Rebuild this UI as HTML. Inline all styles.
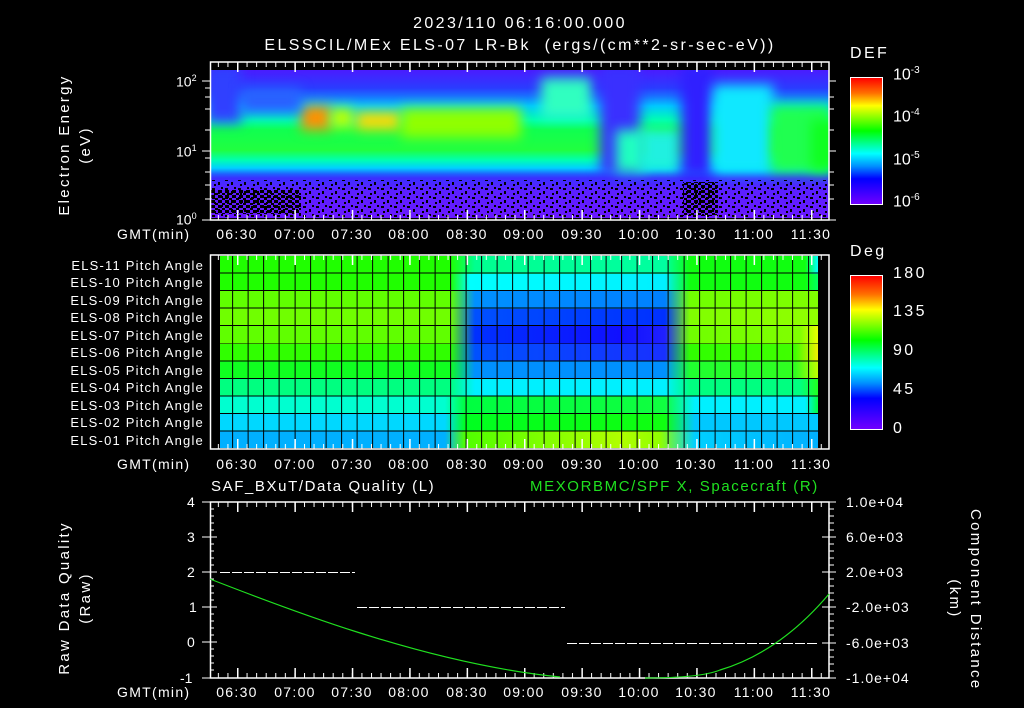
<!DOCTYPE html>
<html><head><meta charset="utf-8"><style>
body{margin:0;background:#000;width:1024px;height:708px;overflow:hidden;position:relative;font-family:"Liberation Sans",sans-serif;color:#fff}
.a{position:absolute}
.t{position:absolute;font-size:14px;white-space:nowrap;line-height:1}
.b{position:absolute;filter:blur(6px)}
#spec{left:211px;top:70px;width:618px;height:148px;overflow:hidden;
background:linear-gradient(#4a1cff 0px,#2a3cff 18px,#1a70ff 26px,#00c8ff 36px,#00ffb0 50px,#10ff50 60px,#20ff40 80px,#00ffb0 90px,#00d0ff 98px,#2060ff 104px,#3a30ff 108px,#5a20ff 120px,#6a18ff 148px)}
#pa{left:220px;top:256px;width:598px;height:193px;display:flex;flex-direction:column}
#pa div{flex:1}
#grid{left:220px;top:256px;width:598px;height:193px;
background:repeating-linear-gradient(90deg,transparent 0 14.56px,#000 14.56px 15.56px),repeating-linear-gradient(180deg,transparent 0 16.55px,#000 16.55px 17.55px);background-position:-2.4px 0,0 0}
.cb{background:linear-gradient(#ff0000 0%,#ff7000 12%,#ffff00 22%,#80ff00 32%,#00ff00 42%,#00ff90 52%,#00ffff 60%,#0090ff 70%,#0000ff 80%,#7000ff 100%);border:1px solid #fff}
.pl{position:absolute;right:820px;font-size:13px;letter-spacing:1.2px;white-space:nowrap}
.tl{position:absolute;width:60px;text-align:center;font-size:14px;letter-spacing:1.3px;line-height:1}
.ls{letter-spacing:2.4px}
</style></head><body>
<div class="t ls" style="left:0;width:1040px;text-align:center;top:16px;font-size:16px">2023/110 06:16:00.000</div>
<div class="t ls" style="left:0;width:1040px;text-align:center;top:38px;font-size:16px">ELSSCIL/MEx ELS-07 LR-Bk&nbsp;&nbsp;(ergs/(cm**2-sr-sec-eV))</div>

<div id="spec" class="a">
<div class="b" style="left:-5px;top:-5px;width:35px;height:58px;background:#3040ff"></div>
<div class="b" style="left:90px;top:36px;width:30px;height:24px;background:#ff9000"></div>
<div class="b" style="left:120px;top:38px;width:22px;height:20px;background:#c0ff00"></div>
<div class="b" style="left:145px;top:42px;width:45px;height:18px;background:#ffd800"></div>
<div class="b" style="left:190px;top:38px;width:120px;height:30px;background:#90ff00"></div>
<div class="b" style="left:30px;top:18px;width:60px;height:25px;background:#2a60ff"></div>
<div class="b" style="left:330px;top:8px;width:50px;height:40px;background:#30ffc0"></div>
<div class="b" style="left:389px;top:-5px;width:40px;height:110px;background:#3a30ff"></div>
<div class="b" style="left:405px;top:60px;width:30px;height:42px;background:#20ffc0"></div>
<div class="b" style="left:430px;top:60px;width:40px;height:40px;background:#20f0e0"></div>
<div class="b" style="left:470px;top:-5px;width:32px;height:112px;background:#3020ff"></div>
<div class="b" style="left:502px;top:15px;width:60px;height:88px;background:#10e8ff"></div>
<div class="b" style="left:560px;top:35px;width:60px;height:68px;background:#20ff50"></div>
<div class="b" style="left:600px;top:50px;width:25px;height:50px;background:#10ff20"></div>
<svg class="a" style="left:0;top:0" width="618" height="148">
<defs><pattern id="sp" width="13" height="9" patternUnits="userSpaceOnUse">
<rect x="1" y="1" width="3" height="2" fill="#000"/><rect x="7" y="4" width="2" height="3" fill="#000"/><rect x="10" y="0" width="2" height="2" fill="#000"/><rect x="3" y="6" width="2" height="2" fill="#000"/></pattern>
<pattern id="sp2" width="7" height="5" patternUnits="userSpaceOnUse"><rect x="0" y="0" width="4" height="3" fill="#000"/><rect x="4" y="3" width="3" height="2" fill="#000"/></pattern></defs>
<rect x="0" y="110" width="618" height="38" fill="url(#sp)"/>
<rect x="0" y="120" width="90" height="24" fill="url(#sp2)"/>
<rect x="472" y="112" width="35" height="34" fill="url(#sp2)"/>
</svg>
</div>

<div id="pa" class="a">
<div style="background:linear-gradient(90deg,#20ff00 0 230px,#00ff90 255px,#00ffa0 445px,#10ff10 470px,#10ff10 585px,#00ffff 598px)"></div>
<div style="background:linear-gradient(90deg,#20ff00 0 230px,#00ffff 250px,#00f0ff 445px,#10ff10 470px,#10ff10 585px,#00ff60 598px)"></div>
<div style="background:linear-gradient(90deg,#60ff00 0 230px,#0090ff 255px,#0080ff 445px,#70ff00 470px,#80ff00 598px)"></div>
<div style="background:linear-gradient(90deg,#70ff00 0 230px,#0050ff 255px,#0030ff 445px,#80ff00 470px,#90ff00 598px)"></div>
<div style="background:linear-gradient(90deg,#60ff00 0 230px,#0030ff 255px,#1010ff 400px,#2020ff 445px,#70ff00 470px,#80ff00 580px,#e8ff00 598px)"></div>
<div style="background:linear-gradient(90deg,#30ff00 0 230px,#0050ff 255px,#1830ff 445px,#30ff00 470px,#40ff00 575px,#f0f000 598px)"></div>
<div style="background:linear-gradient(90deg,#10ff20 0 230px,#0090ff 255px,#0090ff 445px,#20ff30 470px,#30ff20 575px,#c0ff00 598px)"></div>
<div style="background:linear-gradient(90deg,#00ff80 0 230px,#00f0ff 255px,#00f0ff 445px,#00ff80 470px,#00ff80 580px,#20ff20 598px)"></div>
<div style="background:linear-gradient(90deg,#00ffd0 0 225px,#00ff40 245px,#10ff40 445px,#00f0ff 475px,#00f0ff 585px,#00ff40 598px)"></div>
<div style="background:linear-gradient(90deg,#00d8ff 0 225px,#00ff20 245px,#10ff10 445px,#00c8ff 475px,#00c8ff 598px)"></div>
<div style="background:linear-gradient(90deg,#00b0ff 0 225px,#50ff00 245px,#b0ff00 400px,#90ff00 440px,#00d0ff 475px,#00b0ff 598px)"></div>
</div>
<div id="grid" class="a"></div>

<div class="a cb" style="left:850px;top:77px;width:31px;height:126px"></div>
<div class="a cb" style="left:850px;top:275px;width:31px;height:153px"></div>

<svg class="a" style="left:0;top:0" width="1024" height="708">
<defs>
<pattern id="mt" x="237" y="0" width="9.57" height="708" patternUnits="userSpaceOnUse"><rect width="1" height="708" fill="#fff"/></pattern>
<pattern id="Mt" x="237" y="0" width="57.4" height="708" patternUnits="userSpaceOnUse"><rect width="1.5" height="708" fill="#fff"/></pattern>
</defs>
<g fill="none" stroke="#fff" stroke-width="1.5">
<rect x="210.5" y="62" width="618.5" height="158"/>
<rect x="210.5" y="255" width="618.5" height="194"/>
<rect x="210.5" y="502" width="618.5" height="176"/>
</g>
<rect x="211" y="62" width="618" height="5" fill="url(#mt)"/><rect x="211" y="62" width="618" height="10" fill="url(#Mt)"/>
<rect x="211" y="215" width="618" height="5" fill="url(#mt)"/><rect x="211" y="210" width="618" height="10" fill="url(#Mt)"/>
<rect x="211" y="255" width="618" height="5" fill="url(#mt)"/><rect x="211" y="255" width="618" height="10" fill="url(#Mt)"/>
<rect x="211" y="444" width="618" height="5" fill="url(#mt)"/><rect x="211" y="439" width="618" height="10" fill="url(#Mt)"/>
<rect x="211" y="502" width="618" height="5" fill="url(#mt)"/><rect x="211" y="502" width="618" height="10" fill="url(#Mt)"/>
<rect x="211" y="673" width="618" height="5" fill="url(#mt)"/><rect x="211" y="668" width="618" height="10" fill="url(#Mt)"/>
<g stroke="#fff" stroke-width="1">
<path d="M202 81H210M202 151H210M202 220H210M205 97H210M205 109H210M205 130H210M205 172H210M205 185H210M205 199H210M205 88H210M205 158H210"/>
<path d="M829 81H836M829 151H836M829 220H836M829 97H834M829 109H834M829 130H834M829 172H834M829 185H834M829 199H834"/>
<path d="M202 502H217M202 537H217M202 572H217M202 607H217M202 642H217M202 678H217M210 509H214M210 516H214M210 523H214M210 530H214M210 544H214M210 551H214M210 558H214M210 565H214M210 579H214M210 586H214M210 593H214M210 600H214M210 614H214M210 621H214M210 628H214M210 635H214M210 649H214M210 656H214M210 663H214M210 670H214"/>
<path d="M822 502H836M822 537H836M822 572H836M822 607H836M822 643H836M822 678H836M829 509H834M829 516H834M829 523H834M829 530H834M829 544H834M829 551H834M829 558H834M829 565H834M829 579H834M829 586H834M829 593H834M829 600H834M829 614H834M829 621H834M829 628H834M829 635H834M829 650H834M829 657H834M829 664H834M829 671H834"/>
</g>
<g stroke="#fff" stroke-width="1" stroke-dasharray="10 2">
<path d="M220 572.5H355M357 607.5H565M567 643.5H818"/>
</g>
<path d="M210 579 Q 300 614 357 632 Q 470 668 560 677 M645 678 Q 700 678 720 670 Q 780 652 829 594" fill="none" stroke="#20e020" stroke-width="1.2"/>
</svg>

<div class="t" style="left:117px;top:227px;letter-spacing:1.3px">GMT(min)</div>
<div class="t" style="left:117px;top:457px;letter-spacing:1.3px">GMT(min)</div>
<div class="t" style="left:117px;top:685px;letter-spacing:1.3px">GMT(min)</div>

<div class="tl" style="left:207px;top:227px">06:30</div><div class="tl" style="left:265px;top:227px">07:00</div><div class="tl" style="left:322px;top:227px">07:30</div><div class="tl" style="left:379px;top:227px">08:00</div><div class="tl" style="left:437px;top:227px">08:30</div><div class="tl" style="left:494px;top:227px">09:00</div><div class="tl" style="left:552px;top:227px">09:30</div><div class="tl" style="left:609px;top:227px">10:00</div><div class="tl" style="left:666px;top:227px">10:30</div><div class="tl" style="left:724px;top:227px">11:00</div><div class="tl" style="left:781px;top:227px">11:30</div>
<div class="tl" style="left:207px;top:457px">06:30</div><div class="tl" style="left:265px;top:457px">07:00</div><div class="tl" style="left:322px;top:457px">07:30</div><div class="tl" style="left:379px;top:457px">08:00</div><div class="tl" style="left:437px;top:457px">08:30</div><div class="tl" style="left:494px;top:457px">09:00</div><div class="tl" style="left:552px;top:457px">09:30</div><div class="tl" style="left:609px;top:457px">10:00</div><div class="tl" style="left:666px;top:457px">10:30</div><div class="tl" style="left:724px;top:457px">11:00</div><div class="tl" style="left:781px;top:457px">11:30</div>
<div class="tl" style="left:207px;top:685px">06:30</div><div class="tl" style="left:265px;top:685px">07:00</div><div class="tl" style="left:322px;top:685px">07:30</div><div class="tl" style="left:379px;top:685px">08:00</div><div class="tl" style="left:437px;top:685px">08:30</div><div class="tl" style="left:494px;top:685px">09:00</div><div class="tl" style="left:552px;top:685px">09:30</div><div class="tl" style="left:609px;top:685px">10:00</div><div class="tl" style="left:666px;top:685px">10:30</div><div class="tl" style="left:724px;top:685px">11:00</div><div class="tl" style="left:781px;top:685px">11:30</div>

<div class="t" style="left:176px;top:74px">10<sup style="font-size:9px">2</sup></div>
<div class="t" style="left:176px;top:144px">10<sup style="font-size:9px">1</sup></div>
<div class="t" style="left:176px;top:212px">10<sup style="font-size:9px">0</sup></div>
<div class="t" style="left:-5px;top:124px;width:160px;text-align:center;transform:rotate(-90deg);line-height:21px;font-size:15px;letter-spacing:2.3px">Electron Energy<br>(eV)</div>

<div class="t ls" style="left:850px;top:46px;font-size:16px">DEF</div>
<div class="t" style="left:893px;top:66px;font-size:16px">10<sup style="font-size:10px">-3</sup></div>
<div class="t" style="left:893px;top:108px;font-size:16px">10<sup style="font-size:10px">-4</sup></div>
<div class="t" style="left:893px;top:151px;font-size:16px">10<sup style="font-size:10px">-5</sup></div>
<div class="t" style="left:893px;top:193px;font-size:16px">10<sup style="font-size:10px">-6</sup></div>
<div class="t ls" style="left:850px;top:244px;font-size:16px">Deg</div>
<div class="t ls" style="left:893px;top:266px;font-size:16px">180</div>
<div class="t ls" style="left:893px;top:304px;font-size:16px">135</div>
<div class="t ls" style="left:893px;top:343px;font-size:16px">90</div>
<div class="t ls" style="left:893px;top:382px;font-size:16px">45</div>
<div class="t" style="left:893px;top:421px;font-size:16px">0</div>

<div class="pl" style="top:258px">ELS-11 Pitch Angle</div>
<div class="pl" style="top:275px">ELS-10 Pitch Angle</div>
<div class="pl" style="top:293px">ELS-09 Pitch Angle</div>
<div class="pl" style="top:310px">ELS-08 Pitch Angle</div>
<div class="pl" style="top:328px">ELS-07 Pitch Angle</div>
<div class="pl" style="top:345px">ELS-06 Pitch Angle</div>
<div class="pl" style="top:363px">ELS-05 Pitch Angle</div>
<div class="pl" style="top:380px">ELS-04 Pitch Angle</div>
<div class="pl" style="top:398px">ELS-03 Pitch Angle</div>
<div class="pl" style="top:415px">ELS-02 Pitch Angle</div>
<div class="pl" style="top:433px">ELS-01 Pitch Angle</div>

<div class="t ls" style="left:211px;top:479px;font-size:15px;letter-spacing:1.6px">SAF_BXuT/Data Quality (L)</div>
<div class="t" style="left:530px;top:479px;font-size:15px;letter-spacing:1.6px;color:#20e020">MEXORBMC/SPF X, Spacecraft (R)</div>
<div class="t" style="left:187px;top:495px">4</div>
<div class="t" style="left:187px;top:530px">3</div>
<div class="t" style="left:187px;top:565px">2</div>
<div class="t" style="left:189px;top:600px">1</div>
<div class="t" style="left:187px;top:635px">0</div>
<div class="t" style="left:180px;top:671px">-1</div>
<div class="t" style="left:-10px;top:577px;width:170px;text-align:center;transform:rotate(-90deg);line-height:21px;font-size:15px;letter-spacing:2.3px">Raw Data Quality<br>(Raw)</div>
<div class="t" style="left:846px;top:495px;letter-spacing:1px">1.0e+04</div>
<div class="t" style="left:846px;top:530px;letter-spacing:1px">6.0e+03</div>
<div class="t" style="left:846px;top:565px;letter-spacing:1px">2.0e+03</div>
<div class="t" style="left:846px;top:600px;letter-spacing:1px">-2.0e+03</div>
<div class="t" style="left:846px;top:636px;letter-spacing:1px">-6.0e+03</div>
<div class="t" style="left:846px;top:671px;letter-spacing:1px">-1.0e+04</div>
<div class="t" style="left:875px;top:578px;width:180px;text-align:center;transform:rotate(90deg);line-height:21px;font-size:15px;letter-spacing:2.3px">Component Distance<br>(km)</div>
</body></html>
